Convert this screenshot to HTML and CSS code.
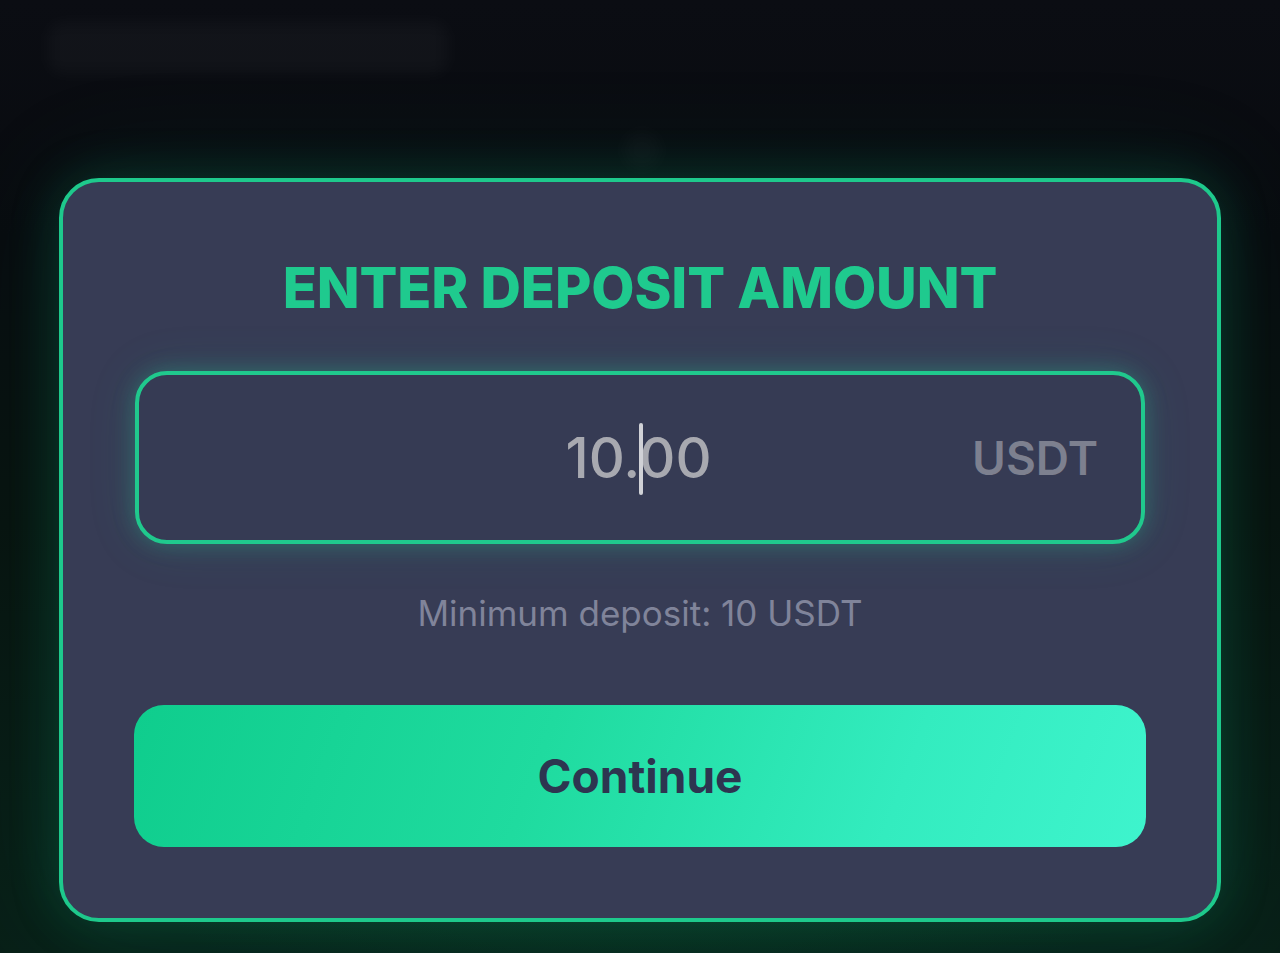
FILE: index.html
```html
<!DOCTYPE html>
<html lang="en">
<head>
<meta charset="utf-8">
<title>Enter deposit amount</title>
<link rel="stylesheet" href="styles.css">
</head>
<body>
<div class="page">
  <div class="backdrop-bar"></div>
  <div class="backdrop-dot"></div>
  <section class="card">
    <h1 class="title">ENTER DEPOSIT AMOUNT</h1>
    <div class="amount-box">
      <span class="spacer"></span>
      <span class="amount"><span>10.</span><span class="caret"></span><span>00</span></span>
      <span class="currency">USDT</span>
    </div>
    <p class="hint">Minimum deposit: 10 USDT</p>
    <button class="continue">Continue</button>
  </section>
</div>
</body>
</html>
```
FILE: styles.css
```css
html, body {
  margin: 0;
  padding: 0;
  height: 100%;
}
body {
  background: #0a0c11;
  font-family: "Inter", "Noto Sans", sans-serif;
  overflow: hidden;
}
.page {
  position: relative;
  width: 1280px;
  height: 953px;
  background:
    radial-gradient(ellipse 760px 520px at 640px 700px, rgba(10, 70, 45, 0.55), rgba(10, 40, 30, 0) 75%),
    linear-gradient(180deg, #0b0d13 0%, #080b0f 25%, #08120f 55%, #082018 100%);
  display: flex;
  flex-direction: column;
  align-items: flex-start;
}
.backdrop-bar {
  margin: 22px 0 0 48px;
  width: 400px;
  height: 52px;
  border-radius: 14px;
  background: rgba(255, 255, 255, 0.03);
  filter: blur(8px);
}
.backdrop-dot {
  position: absolute;
  left: 622px;
  top: 130px;
  width: 40px;
  height: 40px;
  border-radius: 50%;
  background: rgba(255, 255, 255, 0.025);
  filter: blur(8px);
}
.card {
  margin: 104px 0 0 59px;
  width: 1162px;
  height: 744px;
  box-sizing: border-box;
  border: 4px solid #1ec98c;
  border-radius: 40px;
  background: #373c55;
  box-shadow: 0 0 50px rgba(20, 190, 130, 0.22), 0 0 120px rgba(20, 160, 110, 0.12);
  padding: 78px 71px 71px 71px;
  display: flex;
  flex-direction: column;
  align-items: stretch;
}
.title {
  margin: 0;
  font-size: 56px;
  line-height: 56px;
  font-weight: 800;
  color: #1fca8e;
  text-align: center;
  letter-spacing: -0.1px;
}
.amount-box {
  margin: 55px 1px 0 1px;
  height: 173px;
  box-sizing: border-box;
  border: 4px solid #20c98d;
  border-radius: 32px;
  background: #363b54;
  box-shadow: 0 0 22px rgba(40, 200, 150, 0.32), 0 0 50px rgba(40, 170, 140, 0.14);
  display: grid;
  grid-template-columns: 1fr auto 1fr;
  align-items: center;
  padding: 0 43px 0 40px;
}
.amount {
  font-size: 56px;
  font-weight: 500;
  color: #a8a9b0;
  display: flex;
  align-items: center;
  line-height: 1;
}
.caret {
  width: 4px;
  height: 72px;
  background: #d0d1d6;
  border-radius: 2px;
  margin: 0 -4px 0 -1px;
  position: relative;
  top: 1px;
}
.currency {
  justify-self: end;
  font-size: 46px;
  font-weight: 600;
  color: #7d808f;
  line-height: 1;
}
.hint {
  margin: 52px 0 0 0;
  font-size: 35px;
  line-height: 34px;
  font-weight: 400;
  color: #80849a;
  text-align: center;
}
.continue {
  margin: 75px 0 0 0;
  height: 142px;
  border: none;
  border-radius: 30px;
  background: linear-gradient(110deg, #0fcd8d 0%, #1fdb9f 40%, #33ecbf 75%, #3ef4cd 100%);
  font-family: "Inter", "Noto Sans", sans-serif;
  font-size: 46px;
  font-weight: 700;
  color: #2d3550;
  cursor: pointer;
}
```
